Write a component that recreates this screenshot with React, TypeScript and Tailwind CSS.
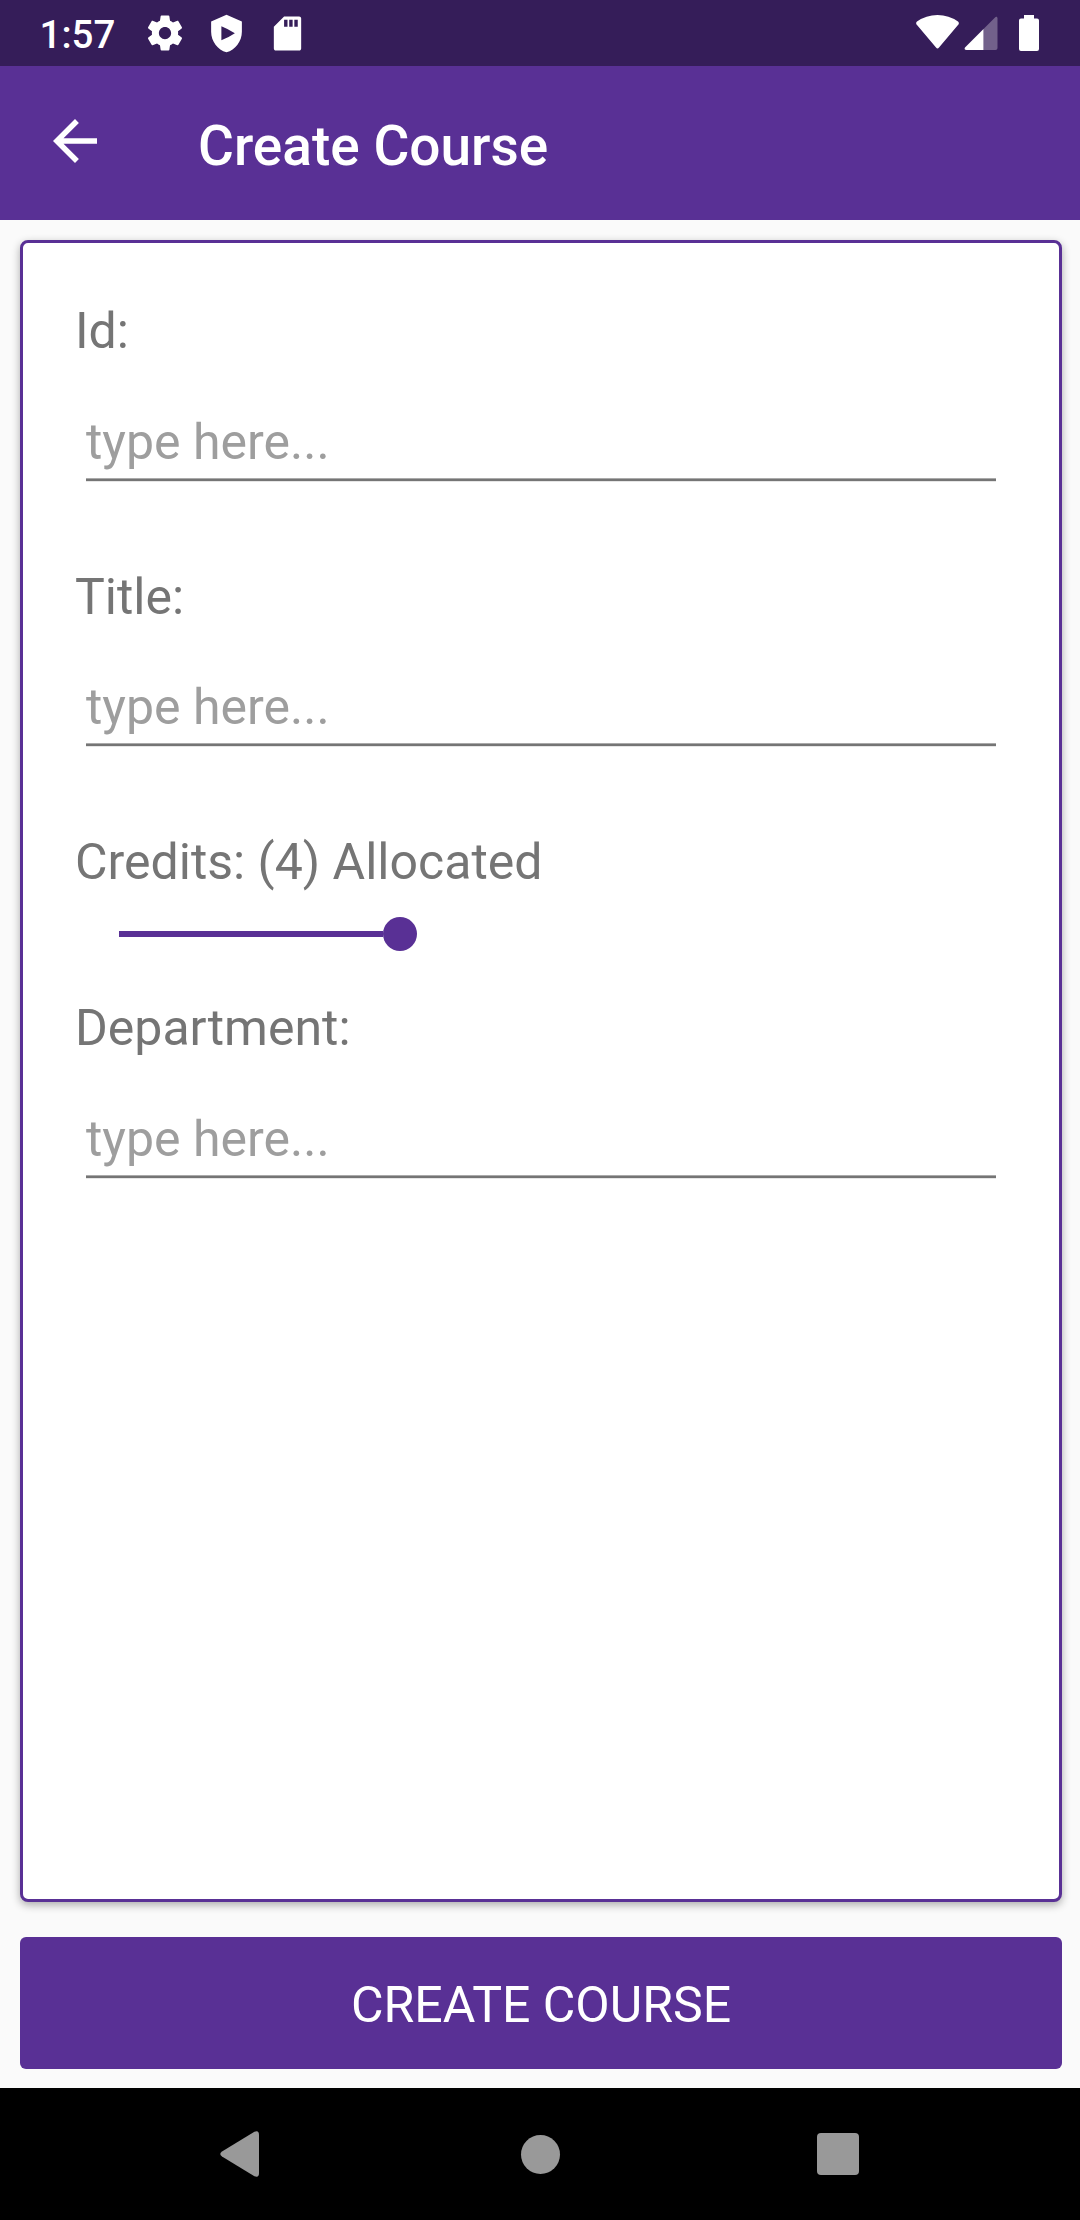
import React from "react";
import { MdArrowBack } from "react-icons/md";

function GearIcon() {
  return (
    <svg viewBox="0 0 24 24" className="size-[42px]" fill="currentColor">
      <path d="M19.43 12.98c.04-.32.07-.64.07-.98s-.03-.66-.07-.98l2.11-1.65c.19-.15.24-.42.12-.64l-2-3.46c-.12-.22-.39-.3-.61-.22l-2.49 1c-.52-.4-1.08-.73-1.69-.98l-.38-2.65C14.46 2.18 14.25 2 14 2h-4c-.25 0-.46.18-.49.42l-.38 2.65c-.61.25-1.17.59-1.69.98l-2.49-1c-.23-.09-.49 0-.61.22l-2 3.46c-.13.22-.07.49.12.64l2.11 1.65c-.04.32-.07.65-.07.98s.03.66.07.98l-2.11 1.65c-.19.15-.24.42-.12.64l2 3.46c.12.22.39.3.61.22l2.49-1c.52.4 1.08.73 1.69.98l.38 2.65c.03.24.24.42.49.42h4c.25 0 .46-.18.49-.42l.38-2.65c.61-.25 1.17-.59 1.69-.98l2.49 1c.23.09.49 0 .61-.22l2-3.46c.12-.22.07-.49-.12-.64l-2.11-1.65zM12 15.500c-1.930 0-3.500-1.570-3.500-3.500s1.570-3.500 3.500-3.500 3.500 1.570 3.500 3.500-1.570 3.500-3.500 3.500z" />
    </svg>
  );
}

function ShieldIcon() {
  return (
    <svg viewBox="0 0 24 24" className="size-[41px]" fill="currentColor">
      <path
        fillRule="evenodd"
        d="M12 1 3 5v6c0 5.55 3.84 10.74 9 12 5.160-1.260 9-6.450 9-12V5l-9-4zM9 7.800v8.200q4-1.500 7.900-4.100Q13 9.400 9 7.800z"
      />
    </svg>
  );
}

function SdCardIcon() {
  return (
    <svg viewBox="0 0 24 24" className="size-[41px]" fill="currentColor">
      <path
        fillRule="evenodd"
        d="M18.800 2H10L4 8v12.800c0 .7.500 1.200 1.200 1.200h13.600c.7 0 1.200-.5 1.200-1.200V3.200c0-.7-.5-1.200-1.200-1.200zM12 8h-2V4h2v4zm3 0h-2V4h2v4zm3 0h-2V4h2v4z"
      />
    </svg>
  );
}

function StatusBar() {
  return (
    <div className="flex h-[66px] items-center bg-[#351d59] pl-[39.5px] pr-[41px] text-white">
      <span className="w-[104px] pt-[2px] text-[38.5px] font-medium leading-[45px]">1:57</span>
      <div className="flex flex-1 items-center gap-[20px]">
        <GearIcon />
        <ShieldIcon />
        <SdCardIcon />
      </div>
      <svg width="43" height="36" viewBox="0 0 43 36" fill="currentColor">
        <path d="M1 10C-.2 9-.1 7.500 1 6.600Q10 0 21.500 0T42 6.600C43.100 7.500 43.200 9 42 10L23 32.500Q21.500 34.500 20 32.500z" />
      </svg>
      <svg width="34" height="36" viewBox="0 0 34 36" fill="currentColor" className="ml-[5px]">
        <path d="M19.500 14v21H2.500C.5 35 .2 33.500 1 32.500z" />
        <path opacity=".3" d="M19.500 14 31 2.400C32.200 1.300 33.500 2 33.500 3.500V33q0 2-2 2h-12z" />
      </svg>
      <svg width="20" height="36" viewBox="0 0 20 36" fill="currentColor" className="ml-[21px]">
        <path d="M5 0h10v3.500h3q2 0 2 2V34q0 2-2 2H2q-2 0-2-2V5.500q0-2 2-2h3z" />
      </svg>
    </div>
  );
}

function AppBar() {
  return (
    <header className="flex h-[154px] bg-[#593095] pl-[42px] text-white">
      <button type="button" aria-label="Back" className="mt-[42px] size-[66px]">
        <MdArrowBack className="size-[66px]" />
      </button>
      <h1 className="ml-[90px] mt-[48px] text-[55px] font-medium leading-[64px]">Create Course</h1>
    </header>
  );
}

function Label({ children }: { children: React.ReactNode }) {
  return <div className="h-[58px] whitespace-nowrap text-[50px] leading-[58px] text-[#757575]">{children}</div>;
}

function TextField() {
  return (
    <div className="ml-[11px] h-[69px] w-[910px]">
      <input
        type="text"
        placeholder="type here..."
        className="block h-[58px] w-full bg-transparent p-0 text-[50px] leading-[58px] outline-none placeholder:text-[#9e9e9e]"
      />
      <div className="mt-[7px] h-[4px] border-b border-t border-b-[#e6e6e6] border-t-[#aaaaaa] bg-[#757575]" />
    </div>
  );
}

function CreditsSlider() {
  return (
    <div className="ml-[44px] flex h-[34px] w-[298px] items-center">
      <div className="h-[6px] flex-1 bg-[#593095]" />
      <div className="size-[34px] rounded-full bg-[#593095]" />
    </div>
  );
}

function NavBar() {
  return (
    <nav className="flex h-[132px] items-center bg-black pl-[220px] text-[#999999]">
      <svg width="39" height="46" viewBox="0 0 39 46" fill="currentColor">
        <path d="M34 1Q39-1.500 39 4v38q0 5.500-5 3L2 25.500Q-1.500 23 2 20.500z" />
      </svg>
      <div className="ml-[262px] size-[39px] rounded-full bg-[#999999]" />
      <div className="ml-[257px] size-[41.500px] rounded-[4px] bg-[#999999]" />
    </nav>
  );
}

export default function App() {
  return (
    <div className="flex h-[2220px] w-[1080px] flex-col bg-[#fafafa] font-['Roboto',sans-serif]">
      <StatusBar />
      <AppBar />
      <main className="flex flex-1 flex-col pb-[19px] pl-[20px] pr-[18px] pt-[20px]">
        <section className="h-[1662px] rounded-[8px] border-[3px] border-[#593095] bg-white pl-[52px] pt-[59px] shadow-[0_3px_8px_rgba(0,0,0,0.32)]">
          <div className="flex flex-col gap-[53px]">
            <Label>Id:</Label>
            <TextField />
          </div>
          <div className="mt-[86px] flex flex-col gap-[52px]">
            <Label>Title:</Label>
            <TextField />
          </div>
          <div className="mt-[86px] flex flex-col gap-[26px]">
            <Label>Credits: (4) Allocated</Label>
            <CreditsSlider />
          </div>
          <div className="mt-[48px] flex flex-col gap-[53px]">
            <Label>Department:</Label>
            <TextField />
          </div>
        </section>
        <button
          type="button"
          className="mt-[35px] h-[132px] rounded-[6px] bg-[#593095] pt-[4px] text-[50px] leading-[58px] text-white"
        >
          CREATE COURSE
        </button>
      </main>
      <NavBar />
    </div>
  );
}
